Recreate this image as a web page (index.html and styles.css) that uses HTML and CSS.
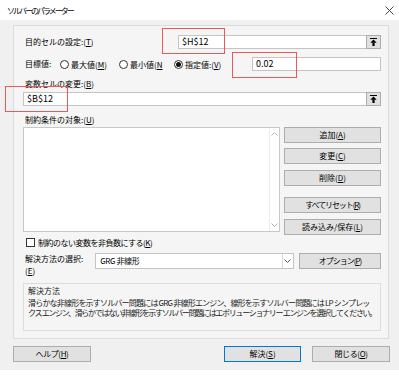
FILE: index.html
```html
<!DOCTYPE html>
<html lang="ja">
<head>
<meta charset="utf-8">
<title>ソルバーのパラメーター</title>
<link rel="stylesheet" href="styles.css">
</head>
<body>
<div class="titlebar">
  <span class="title">ソルバーのパラメーター</span>
  <svg class="close" width="9" height="9" viewBox="0 0 9 9"><path d="M0.5 0.5 L8.5 8.5 M8.5 0.5 L0.5 8.5" stroke="#444" stroke-width="1" fill="none"/></svg>
</div>
<div class="dialog">
  <div class="panel">
    <div class="row r1">
      <span class="label">目的セルの設定:(<u>T</u>)</span>
      <div class="refedit target"><span class="val">$H$12</span><span class="rbtn"><svg width="7" height="8" viewBox="0 0 7 8"><rect x="0" y="0" width="7" height="1" fill="#000"/><polygon points="3.5,1.5 0.3,4.8 6.7,4.8" fill="#000"/><rect x="2.4" y="4.5" width="2.2" height="3.5" fill="#000"/></svg></span></div>
    </div>
    <div class="row r2">
      <span class="label lab-goal">目標値:</span>
      <span class="radio-item w1"><span class="radio"></span>最大値(<u>M</u>)</span>
      <span class="radio-item w2"><span class="radio"></span>最小値(<u>N</u></span>
      <span class="radio-item"><span class="radio checked"></span>指定値:(<u>V</u>)</span>
      <div class="textbox valuebox"><span class="val">0.02</span></div>
    </div>
    <div class="row r3"><span class="label">変数セルの変更:(<u>B</u>)</span></div>
    <div class="row r4">
      <div class="refedit full"><span class="val">$B$12</span><span class="rbtn"><svg width="7" height="8" viewBox="0 0 7 8"><rect x="0" y="0" width="7" height="1" fill="#000"/><polygon points="3.5,1.5 0.3,4.8 6.7,4.8" fill="#000"/><rect x="2.4" y="4.5" width="2.2" height="3.5" fill="#000"/></svg></span></div>
    </div>
    <div class="row r5"><span class="label">制約条件の対象:(<u>U</u>)</span></div>
    <div class="row r6">
      <div class="listbox">
        <div class="list-body"></div>
        <div class="vscroll">
          <svg width="7" height="4" viewBox="0 0 7 4"><path d="M0.5 3.5 L3.5 0.5 L6.5 3.5" stroke="#b0b0b0" fill="none"/></svg>
          <svg width="7" height="4" viewBox="0 0 7 4"><path d="M0.5 0.5 L3.5 3.5 L6.5 0.5" stroke="#b0b0b0" fill="none"/></svg>
        </div>
      </div>
      <div class="sidebtns">
        <div class="btn">追加(<u>A</u>)</div>
        <div class="btn b2">変更(<u>C</u>)</div>
        <div class="btn b3">削除(<u>D</u>)</div>
        <div class="btn b4 tight">すべてリセット(<u>R</u>)</div>
        <div class="btn b5">読み込み/保存(<u>L</u>)</div>
      </div>
    </div>
    <div class="row r7"><span class="checkbox"></span><span class="cb-text">制約のない変数を非負数にする(<u>K</u>)</span></div>
    <div class="row r8">
      <div class="label lab-method">解決方法の選択:<br>(<u>E</u>)</div>
      <div class="select"><span class="val sel-val">GRG 非線形</span><span class="sel-arrow"><svg width="7" height="4" viewBox="0 0 7 4"><path d="M0.5 0.5 L3.5 3.5 L6.5 0.5" stroke="#555" fill="none"/></svg></span></div>
      <div class="btn optbtn">オプション(<u>P</u>)</div>
    </div>
    <div class="groupbox">
      <div class="gb-title">解決方法</div>
      <div class="gb-line l1">滑らかな非線形を示すソルバー問題には GRG 非線形エンジン、線形を示すソルバー問題には LP シンプレッ</div>
      <div class="gb-line l2">クス エンジン、滑らかではない非線形を示すソルバー問題にはエボリューショナリー エンジンを選択してください。</div>
    </div>
  </div>
  <div class="footer">
    <div class="btn fbtn kana">ヘルプ(<u>H</u>)</div>
    <div class="btn fbtn solve">解決(<u>S</u>)</div>
    <div class="btn fbtn kana">閉じる(<u>O</u>)</div>
  </div>
</div>
<div class="mark m1"></div>
<div class="mark m2"></div>
<div class="mark m3"></div>
</body>
</html>
```
FILE: styles.css
```css
* { box-sizing: border-box; }
body {
  margin: 0;
  width: 399px;
  height: 376px;
  background: #ffffff;
  font-family: "Noto Sans CJK JP", "Noto Sans", sans-serif;
  font-size: 8px;
  color: #000;
  position: relative;
  overflow: hidden;
}
u { text-decoration: underline; text-underline-offset: 1px; }
.titlebar {
  height: 20px;
  display: flex;
  align-items: center;
  justify-content: space-between;
  padding: 0 5px 0 7px;
  background: #fff;
}
.title { font-size: 8px; letter-spacing: -2px; color: #000; }
.close { display: block; }
.dialog {
  background: #f0f0f0;
  height: 350px;
  padding: 5px 0 0 13px;
}
.panel {
  width: 376px;
  height: 314px;
  border: 1px solid #dcdcdc;
  background: #f5f5f5;
  padding: 9px 7px 0 9px;
}
.row { display: flex; align-items: center; }
.label { padding-left: 2px; white-space: nowrap; line-height: 12px; }
.val { padding-left: 3px; white-space: nowrap; line-height: 12px; font-size: 9px; }
.r1 { height: 14px; }
.refedit {
  display: flex;
  align-items: stretch;
  height: 14px;
  background: #fff;
  border: 1px solid #c4c4c4;
}
.refedit .val { flex: 1; align-self: center; }
.refedit.target { width: 203px; margin-left: auto; }
.refedit.full { width: 358px; }
.rbtn {
  width: 15px;
  margin: -1px -1px -1px 0;
  background: #e1e1e1;
  border: 1px solid #adadad;
  display: flex;
  align-items: center;
  justify-content: center;
}
.rbtn svg { display: block; }
.r2 { height: 14px; margin-top: 8px; }
.lab-goal { width: 37px; }
.radio-item { display: flex; align-items: center; white-space: nowrap; }
.radio-item.w1 { width: 59px; }
.radio-item.w2 { width: 55px; }
.radio {
  width: 9px;
  height: 9px;
  border: 1px solid #333;
  border-radius: 50%;
  background: #fff;
  margin-right: 2px;
  display: flex;
  align-items: center;
  justify-content: center;
}
.radio.checked::after {
  content: "";
  width: 5px;
  height: 5px;
  border-radius: 50%;
  background: #111;
}
.textbox {
  height: 14px;
  background: #fff;
  border: 1px solid #c4c4c4;
  display: flex;
  align-items: center;
}
.valuebox { width: 129px; margin-left: auto; }
.r3 { height: 12px; margin-top: 7px; }
.r4 { height: 14px; margin-top: 2px; }
.r5 { height: 12px; margin-top: 8px; }
.r6 { height: 108px; margin-top: 1px; align-items: flex-start; }
.listbox {
  width: 260px;
  height: 105px;
  background: #fff;
  border: 1px solid #c8c8c8;
  display: flex;
}
.list-body { flex: 1; }
.vscroll {
  width: 10px;
  border-left: 1px solid #ececec;
  display: flex;
  flex-direction: column;
  justify-content: space-between;
  align-items: center;
  padding: 4px 0 4px;
}
.vscroll svg { display: block; }
.sidebtns { margin-left: 4px; width: 98px; display: flex; flex-direction: column; }
.btn {
  height: 16px;
  background: #e1e1e1;
  border: 1px solid #adadad;
  display: flex;
  align-items: center;
  justify-content: center;
  white-space: nowrap;
  line-height: 12px;
}
.b2 { margin-top: 5px; }
.b3 { margin-top: 6px; }
.b4 { margin-top: 11px; }
.b5 { margin-top: 6px; }
.tight { letter-spacing: -1.1px; }
.r7 { height: 11px; margin-top: 2px; }
.checkbox {
  width: 9px;
  height: 9px;
  border: 1px solid #333;
  background: #fff;
  margin: 0 3px 0 3px;
}
.cb-text { letter-spacing: -0.5px; white-space: nowrap; }
.r8 { height: 24px; margin-top: 5px; align-items: flex-start; }
.lab-method { width: 73px; }
.select {
  width: 201px;
  height: 16px;
  background: #fff;
  border: 1px solid #c4c4c4;
  display: flex;
  align-items: stretch;
}
.select .val { flex: 1; align-self: center; padding-left: 4px; }
.sel-val { font-size: 8px; letter-spacing: -0.4px; }
.sel-arrow {
  width: 11px;
  border-left: 1px solid #d9d9d9;
  display: flex;
  align-items: center;
  justify-content: center;
}
.optbtn { width: 83px; margin-left: 5px; letter-spacing: -1px; }
.groupbox {
  width: 358px;
  height: 48px;
  margin-top: 6px;
  border: 1px solid #dcdcdc;
  padding: 0 0 0 4px;
  color: #222;
}
.gb-title { line-height: 12px; margin-top: 1px; }
.gb-line { line-height: 10px; white-space: nowrap; font-size: 8px; }
.l1 { margin-top: 1px; letter-spacing: -0.8px; }
.l2 { letter-spacing: -1.3px; }
.footer { display: flex; margin-top: 7px; width: 377px; }
.fbtn { width: 78px; }
.kana { letter-spacing: -0.4px; }
.solve { margin-left: auto; width: 77px; border-color: #0078d7; margin-right: 11px; }
.mark {
  position: absolute;
  border: 1px solid #e85a5a;
}
.m1 { left: 162px; top: 28px; width: 63px; height: 26px; }
.m2 { left: 232px; top: 52px; width: 65px; height: 26px; }
.m3 { left: 5px; top: 86px; width: 63px; height: 26px; }
```
